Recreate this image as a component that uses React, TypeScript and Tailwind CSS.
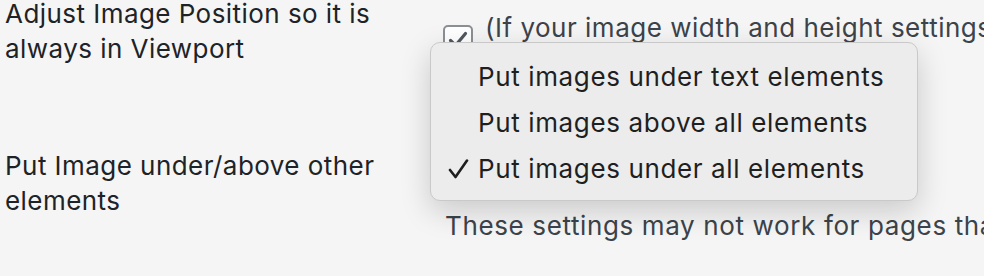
import React from 'react'

const options = [
  { label: 'Put images under text elements', checked: false },
  { label: 'Put images above all elements', checked: false },
  { label: 'Put images under all elements', checked: true },
]

function Checkbox() {
  return (
    <span className="mt-[15px] flex h-[29px] w-[30px] shrink-0 items-center justify-center rounded-[5px] border-2 border-[#8c8f94] bg-white">
      <svg width="20" height="18" viewBox="0 0 20 18" fill="none">
        <path d="M2.5 9.5 L7.5 14.5 L17.5 2.5" stroke="#50575e" strokeWidth="3.2" strokeLinecap="round" strokeLinejoin="round" />
      </svg>
    </span>
  )
}

function SelectMenu() {
  return (
    <div className="absolute left-[430px] top-[42px] w-[488px] rounded-[10px] border border-[#c9c9c9] bg-[#ececec] pb-[8px] pt-[11px] shadow-[0_10px_30px_rgba(0,0,0,0.18)]">
      {options.map((o) => (
        <div key={o.label} className="flex h-[46px] items-center text-[26px] leading-[46px] tracking-[0.62px] text-[#1f1f1f]">
          <span className="flex w-[47px] shrink-0 items-center pl-[17px]">
            {o.checked && (
              <svg width="21" height="20" viewBox="0 0 21 20" fill="none">
                <path d="M2 11 L7.5 18 L19 1.5" stroke="#1f1f1f" strokeWidth="2.6" strokeLinecap="round" strokeLinejoin="round" />
              </svg>
            )}
          </span>
          <span>{o.label}</span>
        </div>
      ))}
    </div>
  )
}

export default function App() {
  return (
    <div className="relative h-[276px] w-[984px] overflow-hidden bg-[#f5f5f5] font-['Inter','Noto_Sans',sans-serif] text-[26px] leading-[35px]">
      <div className="mt-[-4px] grid grid-cols-[443px_1fr]">
        <div className="pl-[5px] tracking-[0.45px] text-[#1d2327]">
          Adjust Image Position so it is
          <br />
          always in Viewport
        </div>
        <div className="flex items-start gap-[12px] whitespace-nowrap pt-[14px] tracking-[0.5px] text-[#3c434a]">
          <Checkbox />
          <span>(If your image width and height settings are larger than the viewport)</span>
        </div>

        <div className="mt-[82px] pl-[5px] tracking-[0.45px] text-[#1d2327]">
          Put Image under/above other
          <br />
          elements
        </div>
        <div className="mt-[82px] flex flex-col whitespace-nowrap pl-[2px] tracking-[0.63px] text-[#3c434a]">
          <div className="h-[60px]" />
          <div>These settings may not work for pages that use absolute positioning.</div>
        </div>
      </div>
      <SelectMenu />
    </div>
  )
}
